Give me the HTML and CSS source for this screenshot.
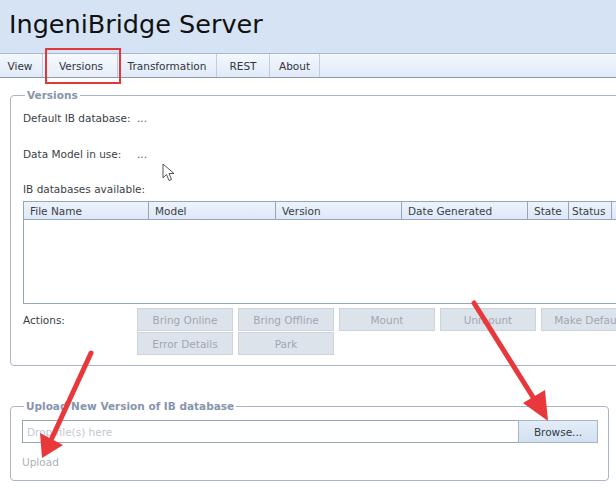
FILE: index.html
```html
<!DOCTYPE html>
<html>
<head>
<meta charset="utf-8">
<link rel="stylesheet" href="styles.css">
</head>
<body>
<div class="page">
  <header class="header"><h1 class="title">IngeniBridge Server</h1></header>
  <nav class="tabs">
    <span class="tab tab-view">View</span>
    <span class="tab tab-versions">Versions</span>
    <span class="tab tab-trans">Transformation</span>
    <span class="tab tab-rest">REST</span>
    <span class="tab tab-about">About</span>
  </nav>
  <div class="content">
    <fieldset class="box box-versions">
      <legend class="legend">Versions</legend>
      <div class="info">
        <span class="label">Default IB database:</span><span class="value">...</span>
      </div>
      <div class="info info-2">
        <span class="label">Data Model in use:</span><span class="value">...</span>
      </div>
      <div class="avail">IB databases available:</div>
      <div class="grid">
        <div class="grid-head">
          <span class="col c1">File Name</span>
          <span class="col c2">Model</span>
          <span class="col c3">Version</span>
          <span class="col c4">Date Generated</span>
          <span class="col c5">State</span>
          <span class="col c6">Status</span>
          <span class="col c7"></span>
        </div>
        <div class="grid-body"></div>
      </div>
      <div class="actions">
        <span class="actions-label">Actions:</span>
        <div class="btns">
          <button class="btn">Bring Online</button>
          <button class="btn">Bring Offline</button>
          <button class="btn">Mount</button>
          <button class="btn">Unmount</button>
          <button class="btn">Make Default</button>
          <button class="btn">Error Details</button>
          <button class="btn">Park</button>
        </div>
      </div>
    </fieldset>
    <fieldset class="box box-upload">
      <legend class="legend">Upload New Version of IB database</legend>
      <div class="file-row">
        <div class="drop">Drop file(s) here</div>
        <div class="browse">Browse...</div>
      </div>
      <div class="upload">Upload</div>
    </fieldset>
  </div>

  <div class="highlight"></div>
  <svg class="cursor" width="14" height="20" viewBox="0 0 14 20">
    <path d="M1 1 L1 15 L4.5 11.5 L7 17.5 L9.5 16.5 L7 10.5 L12 10.5 Z" fill="#fff" stroke="#555" stroke-width="1"/>
  </svg>
  <svg class="arrows" width="616" height="489" viewBox="0 0 616 489">
    <g stroke="#e8383b" stroke-width="5" stroke-linecap="round" fill="#e8383b">
      <line x1="91" y1="353" x2="52" y2="438"/>
      <line x1="474" y1="303" x2="536" y2="402"/>
    </g>
    <polygon points="42,458 40,433 63,445" fill="#e8383b"/>
    <polygon points="548,421 523,403 545,390" fill="#e8383b"/>
  </svg>
</div>
</body>
</html>
```

FILE: styles.css
```css
html, body {
  margin: 0;
  padding: 0;
}
body {
  width: 616px;
  height: 489px;
  overflow: hidden;
  background: #fff;
  font-family: "DejaVu Sans", Verdana, sans-serif;
  font-size: 10.5px;
  color: #3a3f46;
}
.page {
  position: relative;
  width: 616px;
  height: 489px;
  overflow: hidden;
}
.header {
  height: 53px;
  background: #d5e3f4;
  display: flex;
  align-items: center;
}
.title {
  margin: 0 0 6px 9px;
  font-weight: normal;
  font-size: 25.5px;
  color: #111;
}
.tabs {
  height: 23px;
  display: flex;
  background: linear-gradient(#f4f8fe, #e0eaf7);
  border-top: 1px solid #a9b9cd;
  border-bottom: 1px solid #8c9bb0;
}
.tab {
  display: flex;
  align-items: center;
  justify-content: center;
  border-right: 1px solid #c3ccd8;
  color: #2e3540;
  box-sizing: border-box;
}
.tab-view { width: 43px; padding-right: 2px; }
.tab-versions {
  width: 75px;
  padding-left: 2px;
  background: linear-gradient(#f6f9fe, #e6eef9);
}
.tab-trans { width: 99px; }
.tab-rest { width: 53px; }
.tab-about { width: 50px; }
.content {
  padding: 11px 0 0 10px;
  display: flex;
  flex-direction: column;
}
.box {
  margin: 0;
  border: 1px solid #a9b5c5;
  border-radius: 4px;
  padding: 0 0 0 12px;
}
.legend {
  font-weight: bold;
  color: #8595ad;
  padding: 0 2px;
  margin-left: 2px;
  line-height: 12px;
}
.box-versions {
  width: 640px;
  padding-top: 10px;
  padding-bottom: 10px;
}
.info {
  display: flex;
  height: 14px;
  align-items: center;
}
.info-2 {
  margin-top: 22px;
}
.label {
  width: 114px;
}
.value {
  color: #555;
}
.avail {
  margin-top: 21px;
  height: 14px;
  line-height: 14px;
}
.grid {
  margin-top: 5px;
  border: 1px solid #95a5bb;
  width: 640px;
}
.grid-head {
  display: flex;
  height: 17px;
  background: linear-gradient(#edf3fc, #dee8f6);
  border-bottom: 1px solid #95a5bb;
}
.col {
  display: flex;
  align-items: center;
  padding-left: 6px;
  border-right: 1px solid #95a5bb;
  box-sizing: border-box;
  color: #3a4048;
  white-space: nowrap;
  overflow: hidden;
}
.c1 { width: 125px; }
.c2 { width: 127px; }
.c3 { width: 126px; }
.c4 { width: 126px; }
.c5 { width: 41px; }
.c6 { width: 43px; padding-left: 3px; }
.c7 { flex: 1; border-right: none; }
.grid-body {
  height: 83px;
  background: #fff;
}
.actions {
  display: flex;
  margin-top: 4px;
}
.actions-label {
  width: 114px;
  padding-top: 6px;
}
.btns {
  display: grid;
  grid-template-columns: repeat(5, 96px);
  column-gap: 5px;
  row-gap: 1px;
}
.btn {
  height: 23px;
  margin: 0;
  padding: 0;
  font-family: "DejaVu Sans", Verdana, sans-serif;
  font-size: 10.5px;
  color: #9ea7b3;
  background: #dde3eb;
  border: 1px solid #ccd3dc;
  border-radius: 0;
  white-space: nowrap;
  overflow: hidden;
}
.box-upload {
  width: 586px;
  margin-top: 34px;
  padding-top: 8px;
  padding-bottom: 11px;
  padding-left: 11px;
}
.file-row {
  display: flex;
  height: 23px;
  width: 576px;
}
.drop {
  flex: 1;
  border: 1px solid #97a5b9;
  border-right: none;
  display: flex;
  align-items: center;
  padding-left: 4px;
  color: #c2c8d0;
}
.browse {
  width: 78px;
  border: 1px solid #a6b5c8;
  background: linear-gradient(#e4edf8, #d2e0f1);
  display: flex;
  align-items: center;
  justify-content: center;
  color: #2f3a48;
}
.upload {
  margin-top: 12px;
  color: #a9b1bb;
  height: 14px;
  line-height: 14px;
}
.highlight {
  position: absolute;
  left: 45px;
  top: 48px;
  width: 72px;
  height: 32px;
  border: 2px solid #e0393b;
}
.cursor {
  position: absolute;
  left: 162px;
  top: 163px;
}
.arrows {
  position: absolute;
  left: 0;
  top: 0;
}
```
